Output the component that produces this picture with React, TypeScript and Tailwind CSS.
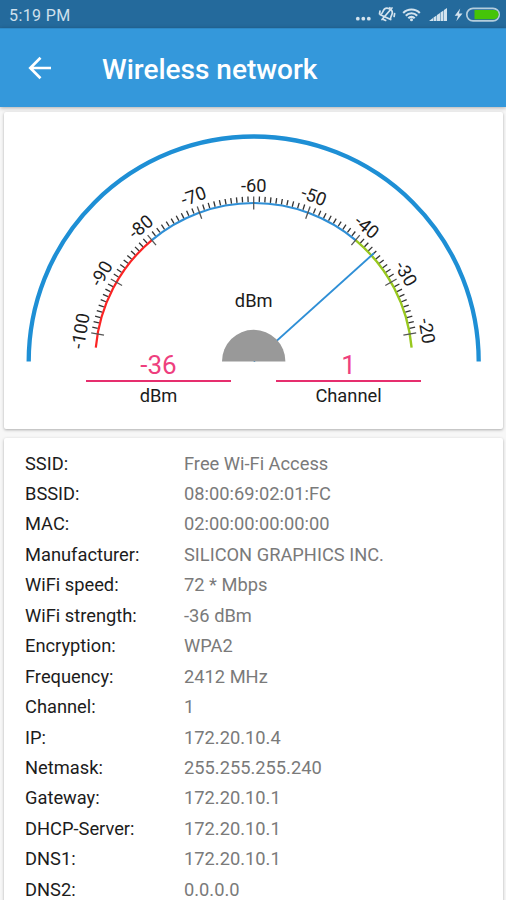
const MIN_DBM = -100;
const MAX_DBM = -20;
const CX = 249.7;
const CY = 249.5;
const SCALE_R = 158.5;

const details = [
  { label: "SSID:", value: "Free Wi-Fi Access" },
  { label: "BSSID:", value: "08:00:69:02:01:FC" },
  { label: "MAC:", value: "02:00:00:00:00:00" },
  { label: "Manufacturer:", value: "SILICON GRAPHICS INC." },
  { label: "WiFi speed:", value: "72 * Mbps" },
  { label: "WiFi strength:", value: "-36 dBm" },
  { label: "Encryption:", value: "WPA2" },
  { label: "Frequency:", value: "2412 MHz" },
  { label: "Channel:", value: "1" },
  { label: "IP:", value: "172.20.10.4" },
  { label: "Netmask:", value: "255.255.255.240" },
  { label: "Gateway:", value: "172.20.10.1" },
  { label: "DHCP-Server:", value: "172.20.10.1" },
  { label: "DNS1:", value: "172.20.10.1" },
  { label: "DNS2:", value: "0.0.0.0" },
];

// 0deg points straight up (-60 dBm), 2deg per dBm
const toAngle = (dbm: number) => (dbm + 60) * 2;

function point(r: number, deg: number) {
  const rad = (deg * Math.PI) / 180;
  return `${(CX + r * Math.sin(rad)).toFixed(2)} ${(CY - r * Math.cos(rad)).toFixed(2)}`;
}

function arc(r: number, from: number, to: number) {
  return `M${point(r, from)} A${r} ${r} 0 0 1 ${point(r, to)}`;
}

function Gauge({ value }: { value: number }) {
  const ticks = Array.from({ length: MAX_DBM - MIN_DBM + 1 }, (_, i) => MIN_DBM + i);

  return (
    <svg width="499" height="250" viewBox="0 0 499 250" fill="none" className="block shrink-0">
      <path d={arc(225, -90, 90)} stroke="#1e8fd5" strokeWidth="4.3" />
      <path d={arc(SCALE_R, -85, -40)} stroke="#fb2424" strokeWidth="2.2" />
      <path d={arc(SCALE_R, -40, 40)} stroke="#2f8fd6" strokeWidth="2.2" />
      <path d={arc(SCALE_R, 40, 85)} stroke="#98c81e" strokeWidth="2.4" />
      {ticks.map((dbm) => {
        const major = dbm % 10 === 0;
        return (
          <g key={dbm} transform={`rotate(${toAngle(dbm)} ${CX} ${CY})`}>
            <line
              x1={CX}
              x2={CX}
              y1={CY - 165}
              y2={CY - (major ? 152 : 159.5)}
              stroke={major ? "#555" : "#333"}
              strokeWidth="1.3"
            />
            {major && (
              <text x={CX} y={CY - 169.5} textAnchor="middle" fontSize="18.3" fill="#1c1c1c">
                {dbm}
              </text>
            )}
          </g>
        );
      })}
      <text x={CX} y="195" textAnchor="middle" fontSize="18.3" fill="#1c1c1c">
        dBm
      </text>
      <path d={`M${CX} ${CY} L${point(162, toAngle(value))}`} stroke="#2f8fd6" strokeWidth="1.9" />
      <path d={`${arc(31.7, -90, 90)} Z`} fill="#999" />
    </svg>
  );
}

function Reading({ value, unit }: { value: string; unit: string }) {
  return (
    <div className="flex w-[145px] flex-col items-center text-[18.3px] leading-[27px] text-[#1c1c1c]">
      <div className="w-full border-b-2 border-[#e62e6e] text-center text-[26px] leading-[30px] text-[#ee3f7e]">
        {value}
      </div>
      <div>{unit}</div>
    </div>
  );
}

function StatusBar() {
  return (
    <div className="flex h-7 items-center justify-between bg-[#246a9c] text-[#cfe0ec]">
      <span className="pl-[9px] pt-[3px] text-base tracking-[0.4px]">5:19&nbsp;PM</span>
      <svg width="152" height="28" viewBox="354 0 152 28" fill="none">
        <g fill="#d3e3ee">
          <circle cx="357.8" cy="18.7" r="1.9" />
          <circle cx="363.3" cy="18.7" r="1.9" />
          <circle cx="368.8" cy="18.7" r="1.9" />
        </g>
        {/* tilted bell, struck through, with vibration marks */}
        <g stroke="#d3e3ee" strokeWidth="1.7" strokeLinecap="round" strokeLinejoin="round">
          <g transform="rotate(25 387 14)">
            <path d="M381.300 17.500c1.200-1.200 1-3 1-4.700c0-2.700 1.900-4.500 4.700-4.500s4.700 1.800 4.700 4.500c0 1.700-.2 3.500 1 4.700z" />
            <path d="M385.500 20.400h3M387 7v1" />
          </g>
          <path d="M380 11l-.5 3M394.600 13.500l-.5 3M382 19.500L392 8" />
        </g>
        <g stroke="#d3e3ee" strokeWidth="2.100">
          <path d="M403.200 13a11.700 11.700 0 0 1 16.600 0" />
          <path d="M405.800 15.700a8 8 0 0 1 11.400 0" />
          <path d="M408.300 18.200a4.500 4.500 0 0 1 6.400 0" />
        </g>
        <circle cx="411.500" cy="19.700" r="1.500" fill="#d3e3ee" />
        <g fill="#d3e3ee">
          <path d="M429 21l4-3v3zM433.500 17.600l3-2.100V21h-3zM437 15l3-2.100V21h-3zM440.500 12.500l3-2.100V21h-3zM444 10l3-2.100V21h-3z" />
          <path d="M460.200 8.500l-5.500 7.200h3.300l-1.700 5.600 6.200-7.800h-3.600z" />
        </g>
        <rect x="466.800" y="8.300" width="32.400" height="12.600" rx="6.200" stroke="#b4cddd" strokeWidth="1.700" />
        <path d="M474.500 10h19.500a4.500 4.500 0 0 1 0 9.200h-19.500z" fill="#45c408" />
      </svg>
    </div>
  );
}

export default function App() {
  return (
    <div className="flex h-[900px] w-[506px] flex-col overflow-hidden bg-[#f7f7f7] font-[Roboto,'Noto_Sans',sans-serif]">
      <StatusBar />

      <header className="flex h-[79px] shrink-0 items-center border-t border-[#2e8ac8] bg-[#3498db] text-white shadow-[0_1px_4px_rgba(0,0,0,0.3)]">
        <svg width="24" height="24" viewBox="0 0 24 24" fill="none" className="ml-7">
          <path d="M23 12H2.500M12.500 1.800L2.300 12l10.200 10.200" stroke="currentColor" strokeWidth="2.700" />
        </svg>
        <h1 className="ml-[50px] pt-[3px] text-[28px] leading-8 font-medium">Wireless network</h1>
      </header>

      <section className="mt-[5px] ml-1 h-[317px] w-[499px] shrink-0 rounded-[2px] bg-white shadow-[0_1px_3px_rgba(0,0,0,0.3)]">
        <Gauge value={-36} />
        <div className="-mt-3 flex justify-between pr-[82px] pl-[82px]">
          <Reading value="-36" unit="dBm" />
          <Reading value="1" unit="Channel" />
        </div>
      </section>

      <section className="mt-[9px] ml-1 w-[499px] grow rounded-[2px] bg-white pt-[10px] shadow-[0_1px_3px_rgba(0,0,0,0.3)]">
        {details.map(({ label, value }) => (
          <div key={label} className="flex h-[30.460px] items-center pl-[21px] text-[18.3px] whitespace-nowrap">
            <span className="w-[159px] text-[#1c1c1c]">{label}</span>
            <span className="text-[#7a7a7a]">{value}</span>
          </div>
        ))}
      </section>
    </div>
  );
}
